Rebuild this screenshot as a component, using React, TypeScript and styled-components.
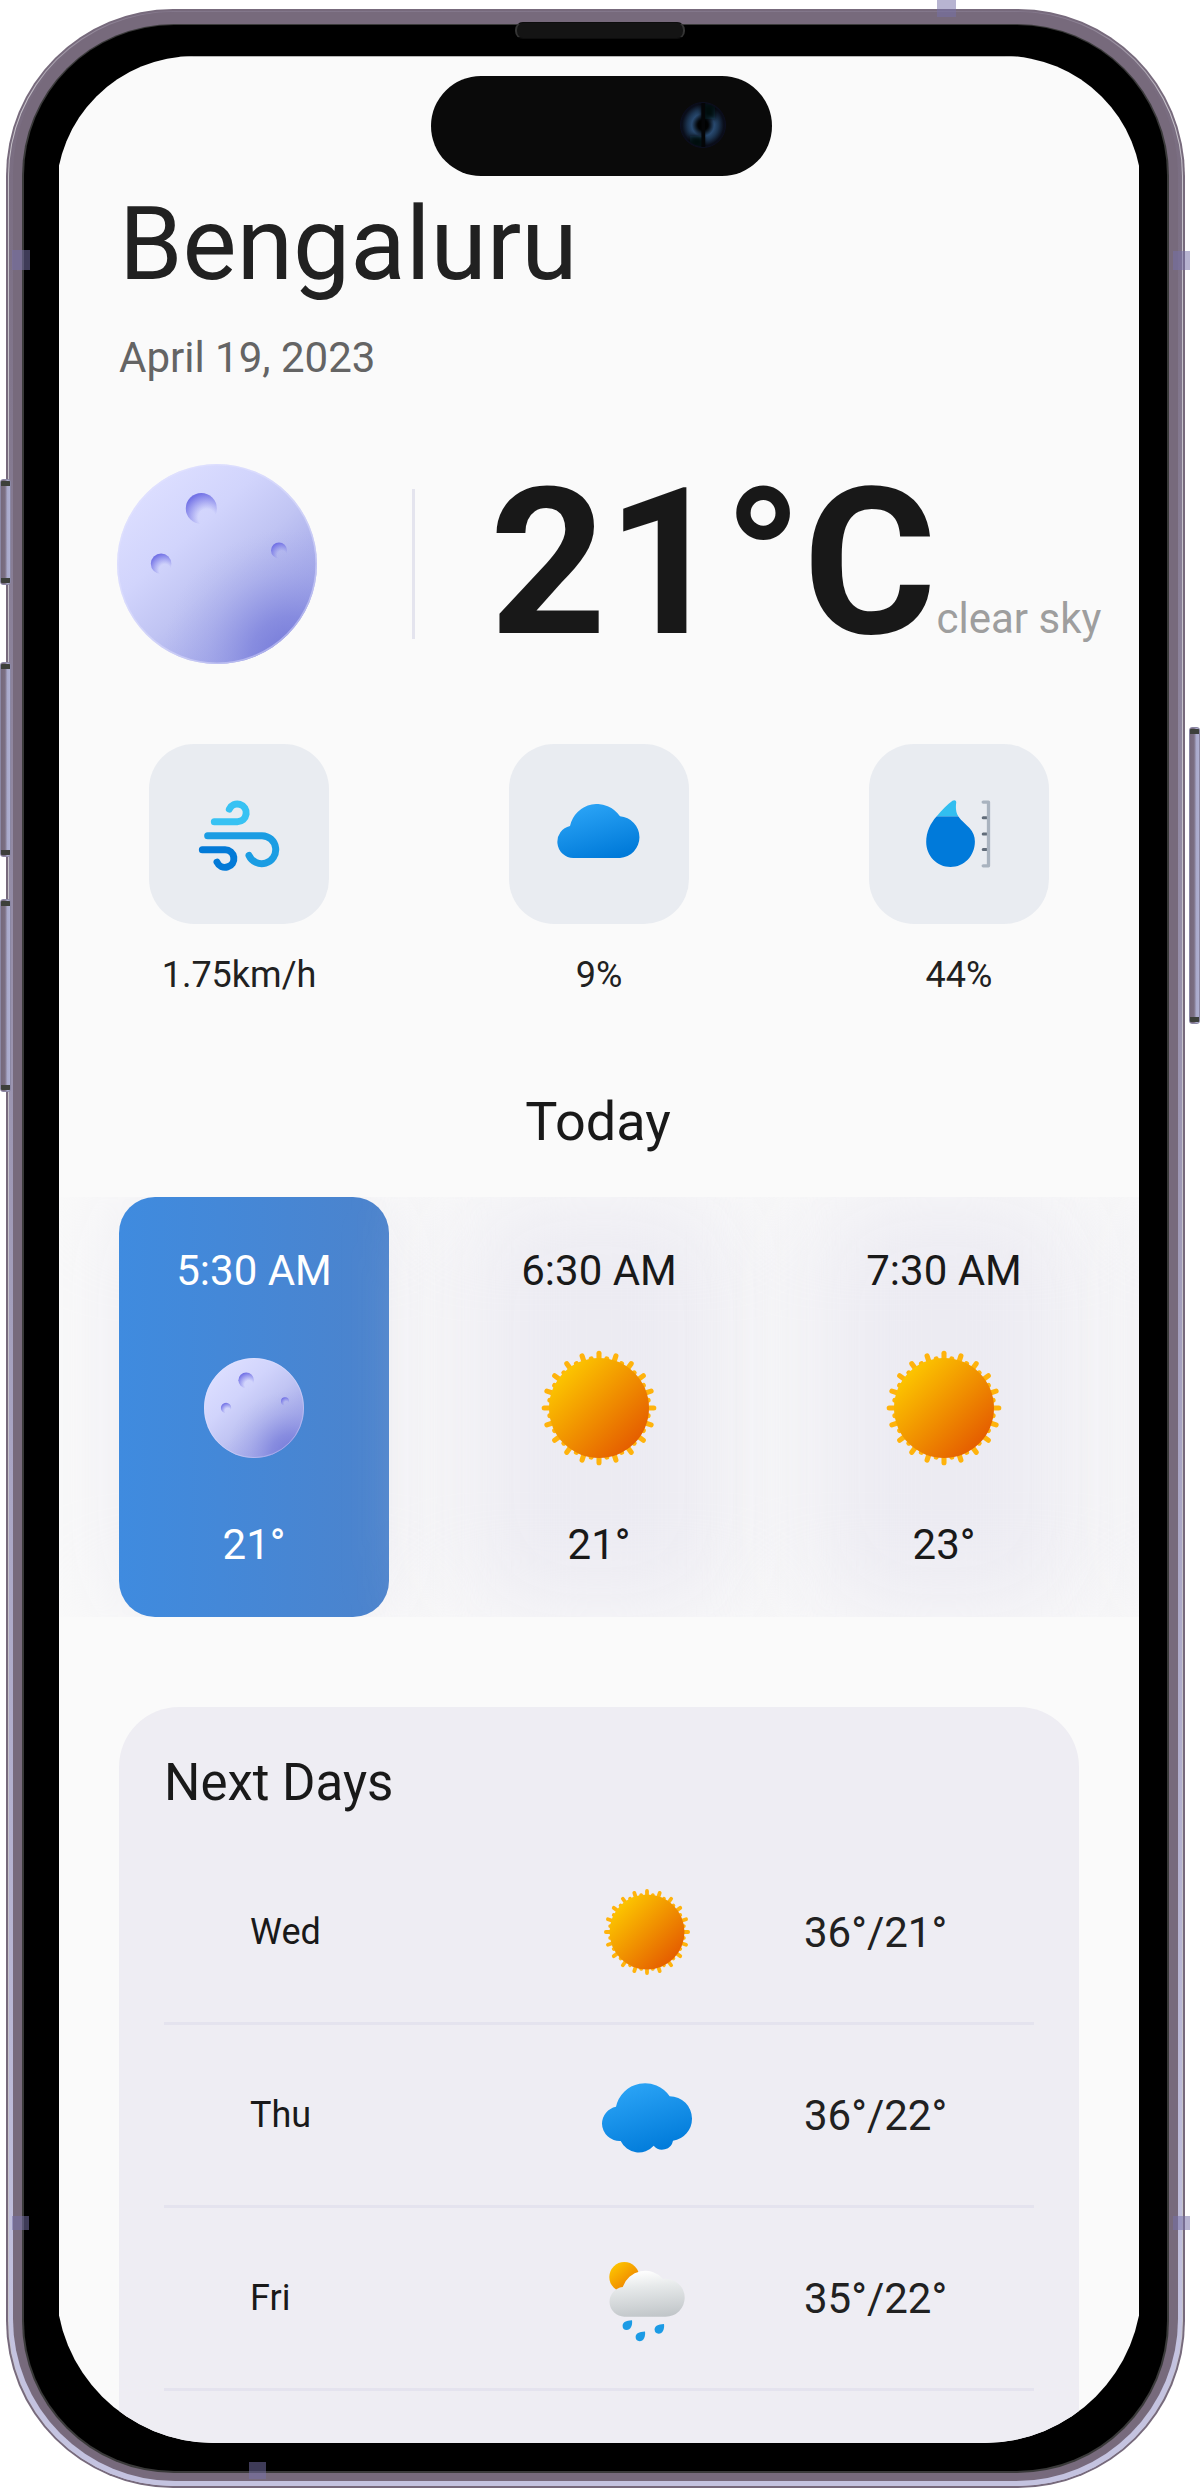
import React, { useId } from "react";
import styled, { createGlobalStyle } from "styled-components";

const GlobalStyle = createGlobalStyle`
  *, *::before, *::after { box-sizing: border-box; }
  html, body { margin: 0; padding: 0; background: #fff; overflow: hidden; }
  body { font-family: Roboto, "Noto Sans", sans-serif; color: #191919; }
  svg { display: block; }
`;

/* ---------- device ---------- */

const Stage = styled.div`
  position: relative;
  width: 1201px;
  height: 2488px;
  padding: 9px 16px 0 6px;
  overflow: hidden;
  background: #fff;
`;

const Shell = styled.div`
  height: 2479px;
  padding: 2px;
  border-radius: 167px;
  background: #776a7c;
`;

const Highlight = styled.div`
  height: 100%;
  padding: 1px 1px 0;
  border-radius: 165px;
  background: linear-gradient(#82768a 0, #c6c2ca 90px, #c6c4cc 94%, #c5c3dc 100%);
`;

const Band = styled.div`
  height: 100%;
  padding: 0 4px 5px;
  border-radius: 164px;
  background: linear-gradient(#776a7c 0, #7d7186 10%, #a9a5c4 58%, #c4c3e0 95%);
`;

const InnerMetal = styled.div`
  height: 100%;
  padding: 12px 9px 8px;
  border-radius: 162px;
  background: #776a7c;
`;

const Rim = styled.div`
  height: 100%;
  padding: 1px 2px 2px;
  border-radius: 152px;
  background: #3a3a3a;
`;

const Bezel = styled.div`
  height: 100%;
  padding: 31px 25px 28px 32px;
  border-radius: 150px;
  background: #000;
`;

const Opening = styled.div`
  height: 100%;
  padding: 0 3px;
  overflow: hidden;
  border-radius: 138px 138px 158px 158px;
`;

const Screen = styled.main`
  width: 1080px;
  height: 100%;
  padding-top: 128px;
  overflow: hidden;
  background: #fafafa;
  box-shadow: inset 0 1px #b4b4b4;
`;

const Island = styled.div`
  position: absolute;
  left: 431.4px;
  top: 76.3px;
  width: 340.2px;
  height: 99.4px;
  padding: 25px 0 0 248px;
  border-radius: 50px;
  background: #0a0a0a;
`;

const Speaker = styled.div`
  position: absolute;
  left: 515px;
  top: 22px;
  width: 170px;
  height: 17px;
  border-radius: 8px;
  background: #141414;
  border: solid #0d0d0d;
  border-width: 1px 2px;
  border-left-color: #343434;
  border-right-color: #343434;
`;

const SideKey = styled.div<{ $x: number; $y: number; $h: number }>`
  position: absolute;
  left: ${(p) => p.$x}px;
  top: ${(p) => p.$y}px;
  width: 11px;
  height: ${(p) => p.$h}px;
  border: 1px solid #8b87a4;
  border-radius: 3px;
  background:
    linear-gradient(#3c3f3a, #3c3f3a) 0 1px / 100% 5px no-repeat,
    linear-gradient(#3c3f3a, #3c3f3a) 0 calc(100% - 1px) / 100% 5px no-repeat,
    linear-gradient(90deg, #75687b 0, #7b6f83 45%, #a9a9cb 70%, #afb0d2 100%);
`;

const Antenna = styled.div<{ $x: number; $y: number; $w: number; $h: number }>`
  position: absolute;
  left: ${(p) => p.$x}px;
  top: ${(p) => p.$y}px;
  width: ${(p) => p.$w}px;
  height: ${(p) => p.$h}px;
  background: rgba(118, 112, 167, 0.525);
`;

/* ---------- weather screen ---------- */

const Header = styled.header`
  padding-left: 60px;
`;

const City = styled.h1`
  margin: 0;
  font-size: 102px;
  font-weight: 400;
  line-height: 120px;
  color: #212121;
`;

const DateLine = styled.p`
  margin: 29px 0 0;
  font-size: 42px;
  line-height: 50px;
  color: #646464;
`;

const Hero = styled.section`
  display: flex;
  align-items: center;
  height: 200px;
  margin-top: 81px;
  padding-left: 58px;
`;

const Divider = styled.div`
  width: 3px;
  height: 150px;
  margin: 0 74.5px 0 95px;
  background: #e4e4ee;
`;

const Reading = styled.div`
  display: flex;
  align-items: baseline;
  height: 200px;
  line-height: 200px;
  white-space: nowrap;
`;

const Degrees = styled.span`
  font-size: 204px;
  font-weight: 700;
  color: #181818;
`;

const Condition = styled.span`
  font-size: 42px;
  color: #9e9e9e;
`;

const Metrics = styled.section`
  display: grid;
  grid-template-columns: repeat(3, 1fr);
  margin-top: 80px;
`;

const Metric = styled.div`
  display: flex;
  flex-direction: column;
  align-items: center;
  gap: 30px;
`;

const MetricTile = styled.div`
  display: flex;
  align-items: center;
  justify-content: center;
  width: 180px;
  height: 180px;
  border-radius: 45px;
  background: #e9ecf1;
`;

const MetricValue = styled.span`
  font-size: 36px;
  line-height: 42px;
  color: #212121;
`;

const Today = styled.h2`
  margin: 94px 2px 43px 0;
  font-size: 54px;
  font-weight: 400;
  line-height: 64px;
  text-align: center;
`;

const Hours = styled.section`
  display: flex;
  gap: 75px;
  height: 420px;
  padding-left: 60px;
  overflow: hidden;
`;

const Hour = styled.article<{ $active?: boolean }>`
  position: relative;
  display: flex;
  flex: 0 0 270px;
  flex-direction: column;
  align-items: center;
  justify-content: space-between;
  padding: 49px 0 48px;
  border-radius: 36px;
  font-size: 42px;
  line-height: 49px;
  color: ${(p) => (p.$active ? "#fff" : "#191919")};

  &::before,
  &::after {
    content: "";
    position: absolute;
    inset: 0;
    border-radius: 36px;
  }

  &::before {
    background: #ecebf2;
    filter: blur(51px);
  }

  &::after {
    background: ${(p) =>
      p.$active ? "linear-gradient(90deg, #3f8bdf, #4c83cc)" : "none"};
  }

  > * {
    position: relative;
    z-index: 1;
  }
`;

const HourIcon = styled.div`
  display: flex;
  align-items: center;
  justify-content: center;
  width: 120px;
  height: 120px;
`;

const NextDays = styled.section`
  height: 900px;
  margin: 90px 60px 0;
  padding: 46px 45px 0;
  border-radius: 60px;
  background: #eeedf3;
`;

const NextTitle = styled.h2`
  margin: 0 0 29px;
  font-size: 51px;
  font-weight: 400;
  line-height: 60px;
`;

const DayRow = styled.div`
  display: grid;
  grid-template-columns: 310px 174px 1fr;
  align-items: center;
  height: 183px;
  padding-left: 86px;
  border-bottom: 3px solid #e4e3ee;
`;

const DayName = styled.span`
  font-size: 36px;
  line-height: 42px;
`;

const DayIcon = styled.div`
  display: flex;
  justify-content: center;
`;

const DayTemp = styled.span`
  padding: 2px 0 0 70px;
  font-size: 42px;
  line-height: 50px;
  color: #212121;
`;

/* ---------- icons ---------- */

const craters = [
  { x: 84.3, y: 44.4, r: 15.5 },
  { x: 44.1, y: 99.8, r: 10.3 },
  { x: 162, y: 86.4, r: 8 },
];

function Moon({ size }: { size: number }) {
  const id = useId();
  return (
    <svg width={size} height={size} viewBox="0 0 200 200">
      <defs>
        <linearGradient id={`${id}a`} x1="0.15" y1="0.12" x2="0.85" y2="0.9">
          <stop offset="0" stopColor="#dcdeff" />
          <stop offset="0.3" stopColor="#d1d4fc" />
          <stop offset="0.55" stopColor="#c0c4f3" />
          <stop offset="1" stopColor="#9297e3" />
        </linearGradient>
        <radialGradient id={`${id}b`} cx="172" cy="190" r="125" gradientUnits="userSpaceOnUse">
          <stop offset="0" stopColor="#7479d8" stopOpacity="0.95" />
          <stop offset="0.3" stopColor="#7f84dd" stopOpacity="0.72" />
          <stop offset="0.65" stopColor="#989de5" stopOpacity="0.3" />
          <stop offset="1" stopColor="#a9aeea" stopOpacity="0" />
        </radialGradient>
        <radialGradient id={`${id}c`} cx="0.68" cy="0.8" r="0.8">
          <stop offset="0.35" stopColor="#7574e6" stopOpacity="0" />
          <stop offset="1" stopColor="#6f6ee5" stopOpacity="0.95" />
        </radialGradient>
      </defs>
      <circle cx="100" cy="100" r="100" fill={`url(#${id}a)`} />
      <circle cx="100" cy="100" r="100" fill={`url(#${id}b)`} />
      <circle cx="100" cy="100" r="99.2" fill="none" stroke="#e4e5ff" strokeOpacity="0.45" strokeWidth="1.6" />
      {craters.map((c) => (
        <circle key={c.x} cx={c.x} cy={c.y} r={c.r} fill={`url(#${id}c)`} />
      ))}
    </svg>
  );
}

function Sun({ size }: { size: number }) {
  const id = useId();
  return (
    <svg width={size} height={size} viewBox="-45 -45 90 90">
      <defs>
        <linearGradient id={id} x1="0.12" y1="0.12" x2="0.88" y2="0.88">
          <stop offset="0" stopColor="#fdc800" />
          <stop offset="1" stopColor="#e45a00" />
        </linearGradient>
      </defs>
      <g stroke="#ffb30c" strokeWidth="3.8" strokeLinecap="round">
        {Array.from({ length: 40 }, (_, i) => (
          <line
            key={i}
            x1="0"
            y1="-34"
            x2="0"
            y2={i % 2 ? -37.3 : -41.1}
            transform={`rotate(${i * 9})`}
          />
        ))}
      </g>
      <circle r="37.5" fill={`url(#${id})`} />
    </svg>
  );
}

function Wind() {
  return (
    <svg width="100" height="100" viewBox="147 162 300 300">
      <g fill="none" strokeWidth="21" strokeLinecap="round">
        <path stroke="#38c2f3" d="M223 275H292A26.5 26.5 0 1 0 268 237.5" />
        <path stroke="#1b9de3" d="M203 317H366A42 42 0 1 1 327 376.5" />
        <path stroke="#037ad7" d="M187 359H255A26.5 26.5 0 1 1 231 396.5" />
      </g>
    </svg>
  );
}

function BlueGradient({ id }: { id: string }) {
  return (
    <linearGradient id={id} x1="0.28" y1="0.02" x2="0.68" y2="0.98">
      <stop offset="0" stopColor="#2ba4f6" />
      <stop offset="1" stopColor="#007ad9" />
    </linearGradient>
  );
}

function Cloudiness() {
  const id = useId();
  return (
    <svg width="84" height="60" viewBox="0 0 84 60">
      <defs>
        <BlueGradient id={id} />
      </defs>
      <path
        fill={`url(#${id})`}
        d="M16.3 54A16.2 16.2 0 0 1 13 22A27.6 27.6 0 0 1 63 12.3A20.9 20.9 0 0 1 63 54Z"
      />
    </svg>
  );
}

const dropOutline =
  "M43.5 16.8C45.5 15.5 47.5 16.3 47.2 18.8C46.6 24 46.7 28 49.4 32.4C52 36.5 57 40 60.5 44C64 48 65.9 52 65.9 57.5C65.9 72 55 83 41.5 83C28 83 17.2 72 17.2 58C17.2 48 21.5 39 27.5 32.4C33 26 38.5 20.5 43.5 16.8Z";

function Humidity() {
  const id = useId();
  return (
    <svg width="100" height="100" viewBox="0 0 100 100">
      <clipPath id={id}>
        <path d={dropOutline} />
      </clipPath>
      <g clipPath={`url(#${id})`}>
        <rect width="100" height="32.4" fill="#32bef0" />
        <rect y="32.4" width="100" height="67.6" fill="#007ada" />
      </g>
      <path d="M74.2 33.8H77.5M74.2 49.9H77.5M74.2 65.6H77.5" stroke="#616c79" strokeWidth="3" strokeLinecap="round" />
      <path d="M74.2 18.1H79.5V81.8H74.2" fill="none" stroke="#a9b3bf" strokeWidth="3.3" strokeLinecap="round" strokeLinejoin="round" />
    </svg>
  );
}

function Overcast() {
  const id = useId();
  return (
    <svg width="90" height="90" viewBox="0 -13 90 90">
      <defs>
        <BlueGradient id={id} />
      </defs>
      <path
        fill={`url(#${id})`}
        d="M18.7 58A17.6 17.6 0 0 1 0 40.7A17.6 17.6 0 0 1 14 23.7A29.7 29.7 0 0 1 67.7 13.3A22.3 22.3 0 0 1 90 35.7A22.3 22.3 0 0 1 71 57.7A11 11 0 0 1 51.7 62.7A20 20 0 0 1 18.7 58Z"
      />
    </svg>
  );
}

const drops = ["translate(30 67.3)", "translate(43 78.5)", "translate(62 71)"];

function SunShower() {
  const id = useId();
  return (
    <svg width="90" height="90" viewBox="0 0 90 90">
      <defs>
        <linearGradient id={`${id}a`} x1="0.1" y1="0.15" x2="0.75" y2="0.95">
          <stop offset="0" stopColor="#fdc300" />
          <stop offset="1" stopColor="#ec7a00" />
        </linearGradient>
        <linearGradient id={`${id}b`} x1="0.42" y1="0" x2="0.56" y2="1">
          <stop offset="0" stopColor="#fff" />
          <stop offset="0.35" stopColor="#e6e9ea" />
          <stop offset="1" stopColor="#c1c6c9" />
        </linearGradient>
      </defs>
      <circle cx="22.3" cy="24" r="15" fill={`url(#${id}a)`} />
      <path
        fill={`url(#${id}b)`}
        d="M22.3 63.7A14.9 14.9 0 0 1 20.7 34A23.6 23.6 0 0 1 61 26A19 19 0 0 1 82.7 44.7A19 19 0 0 1 63.7 63.7Z"
      />
      {drops.map((t) => (
        <path
          key={t}
          transform={t}
          fill="#1b9be5"
          d="M0 0C.7 5-1.3 9.7-5.4 9.7A4.2 4.2 0 0 1-9.4 5.6C-9.4 1.8-6 .3 0 0Z"
        />
      ))}
    </svg>
  );
}

function Lens() {
  const id = useId();
  return (
    <svg width="48" height="48" viewBox="-24 -24 48 48">
      <defs>
        <radialGradient id={`${id}a`}>
          <stop offset="0" stopColor="#000" />
          <stop offset="0.22" stopColor="#020406" />
          <stop offset="0.5" stopColor="#294a70" />
          <stop offset="0.68" stopColor="#1c3552" />
          <stop offset="0.92" stopColor="#0a0e1a" />
          <stop offset="1" stopColor="#0a0b18" />
        </radialGradient>
        <filter id={`${id}f`} x="-100%" y="-50%" width="300%" height="200%">
          <feGaussianBlur stdDeviation="2.4" />
        </filter>
        <clipPath id={`${id}k`}>
          <circle r="21.5" />
        </clipPath>
      </defs>
      <circle r="22.5" fill={`url(#${id}a)`} stroke="#0c0f20" strokeWidth="1" />
      <g clipPath={`url(#${id}k)`} filter={`url(#${id}f)`}>
        <rect x="-1.5" y="-22" width="14" height="16" fill="#05070a" />
        <rect x="-13" y="11" width="14" height="12" fill="#05070a" />
        <circle r="5" fill="#000" />
      </g>
      <rect x="-1.6" y="-22" width="3.8" height="44" fill="#040507" />
    </svg>
  );
}

/* ---------- data ---------- */

const metrics = [
  { value: "1.75km/h", icon: <Wind /> },
  { value: "9%", icon: <Cloudiness /> },
  { value: "44%", icon: <Humidity /> },
];

const hours = [
  { time: "5:30 AM", temp: "21°", icon: <Moon size={100} />, active: true },
  { time: "6:30 AM", temp: "21°", icon: <Sun size={120} /> },
  { time: "7:30 AM", temp: "23°", icon: <Sun size={120} /> },
];

const days = [
  { day: "Wed", temp: "36°/21°", icon: <Sun size={90} /> },
  { day: "Thu", temp: "36°/22°", icon: <Overcast /> },
  { day: "Fri", temp: "35°/22°", icon: <SunShower /> },
];

const keys = [
  { x: 0, y: 479, h: 106 },
  { x: 0, y: 662, h: 195 },
  { x: 0, y: 899, h: 193 },
  { x: 1189, y: 727, h: 297 },
];

const antennas = [
  { x: 937, y: 0, w: 19, h: 17 },
  { x: 12, y: 250, w: 18, h: 20 },
  { x: 1173, y: 251, w: 17, h: 19 },
  { x: 12, y: 2216, w: 17, h: 14 },
  { x: 1173, y: 2216, w: 17, h: 14 },
  { x: 249, y: 2462, w: 17, h: 17 },
];

function WeatherScreen() {
  return (
    <Screen>
      <Header>
        <City>Bengaluru</City>
        <DateLine>April 19, 2023</DateLine>
      </Header>
      <Hero>
        <Moon size={200} />
        <Divider />
        <Reading>
          <Degrees>21°C</Degrees>
          <Condition>clear sky</Condition>
        </Reading>
      </Hero>
      <Metrics>
        {metrics.map((m) => (
          <Metric key={m.value}>
            <MetricTile>{m.icon}</MetricTile>
            <MetricValue>{m.value}</MetricValue>
          </Metric>
        ))}
      </Metrics>
      <Today>Today</Today>
      <Hours>
        {hours.map((h) => (
          <Hour key={h.time} $active={h.active}>
            <span>{h.time}</span>
            <HourIcon>{h.icon}</HourIcon>
            <span>{h.temp}</span>
          </Hour>
        ))}
        <Hour />
      </Hours>
      <NextDays>
        <NextTitle>Next Days</NextTitle>
        {days.map((d) => (
          <DayRow key={d.day}>
            <DayName>{d.day}</DayName>
            <DayIcon>{d.icon}</DayIcon>
            <DayTemp>{d.temp}</DayTemp>
          </DayRow>
        ))}
      </NextDays>
    </Screen>
  );
}

export default function App() {
  return (
    <>
      <GlobalStyle />
      <Stage>
        <Shell>
          <Highlight>
            <Band>
              <InnerMetal>
                <Rim>
                  <Bezel>
                    <Opening>
                      <WeatherScreen />
                    </Opening>
                  </Bezel>
                </Rim>
              </InnerMetal>
            </Band>
          </Highlight>
        </Shell>
        {keys.map((k) => (
          <SideKey key={k.y} $x={k.x} $y={k.y} $h={k.h} />
        ))}
        {antennas.map((a) => (
          <Antenna key={`${a.x}-${a.y}`} $x={a.x} $y={a.y} $w={a.w} $h={a.h} />
        ))}
        <Speaker />
        <Island>
          <Lens />
        </Island>
      </Stage>
    </>
  );
}
